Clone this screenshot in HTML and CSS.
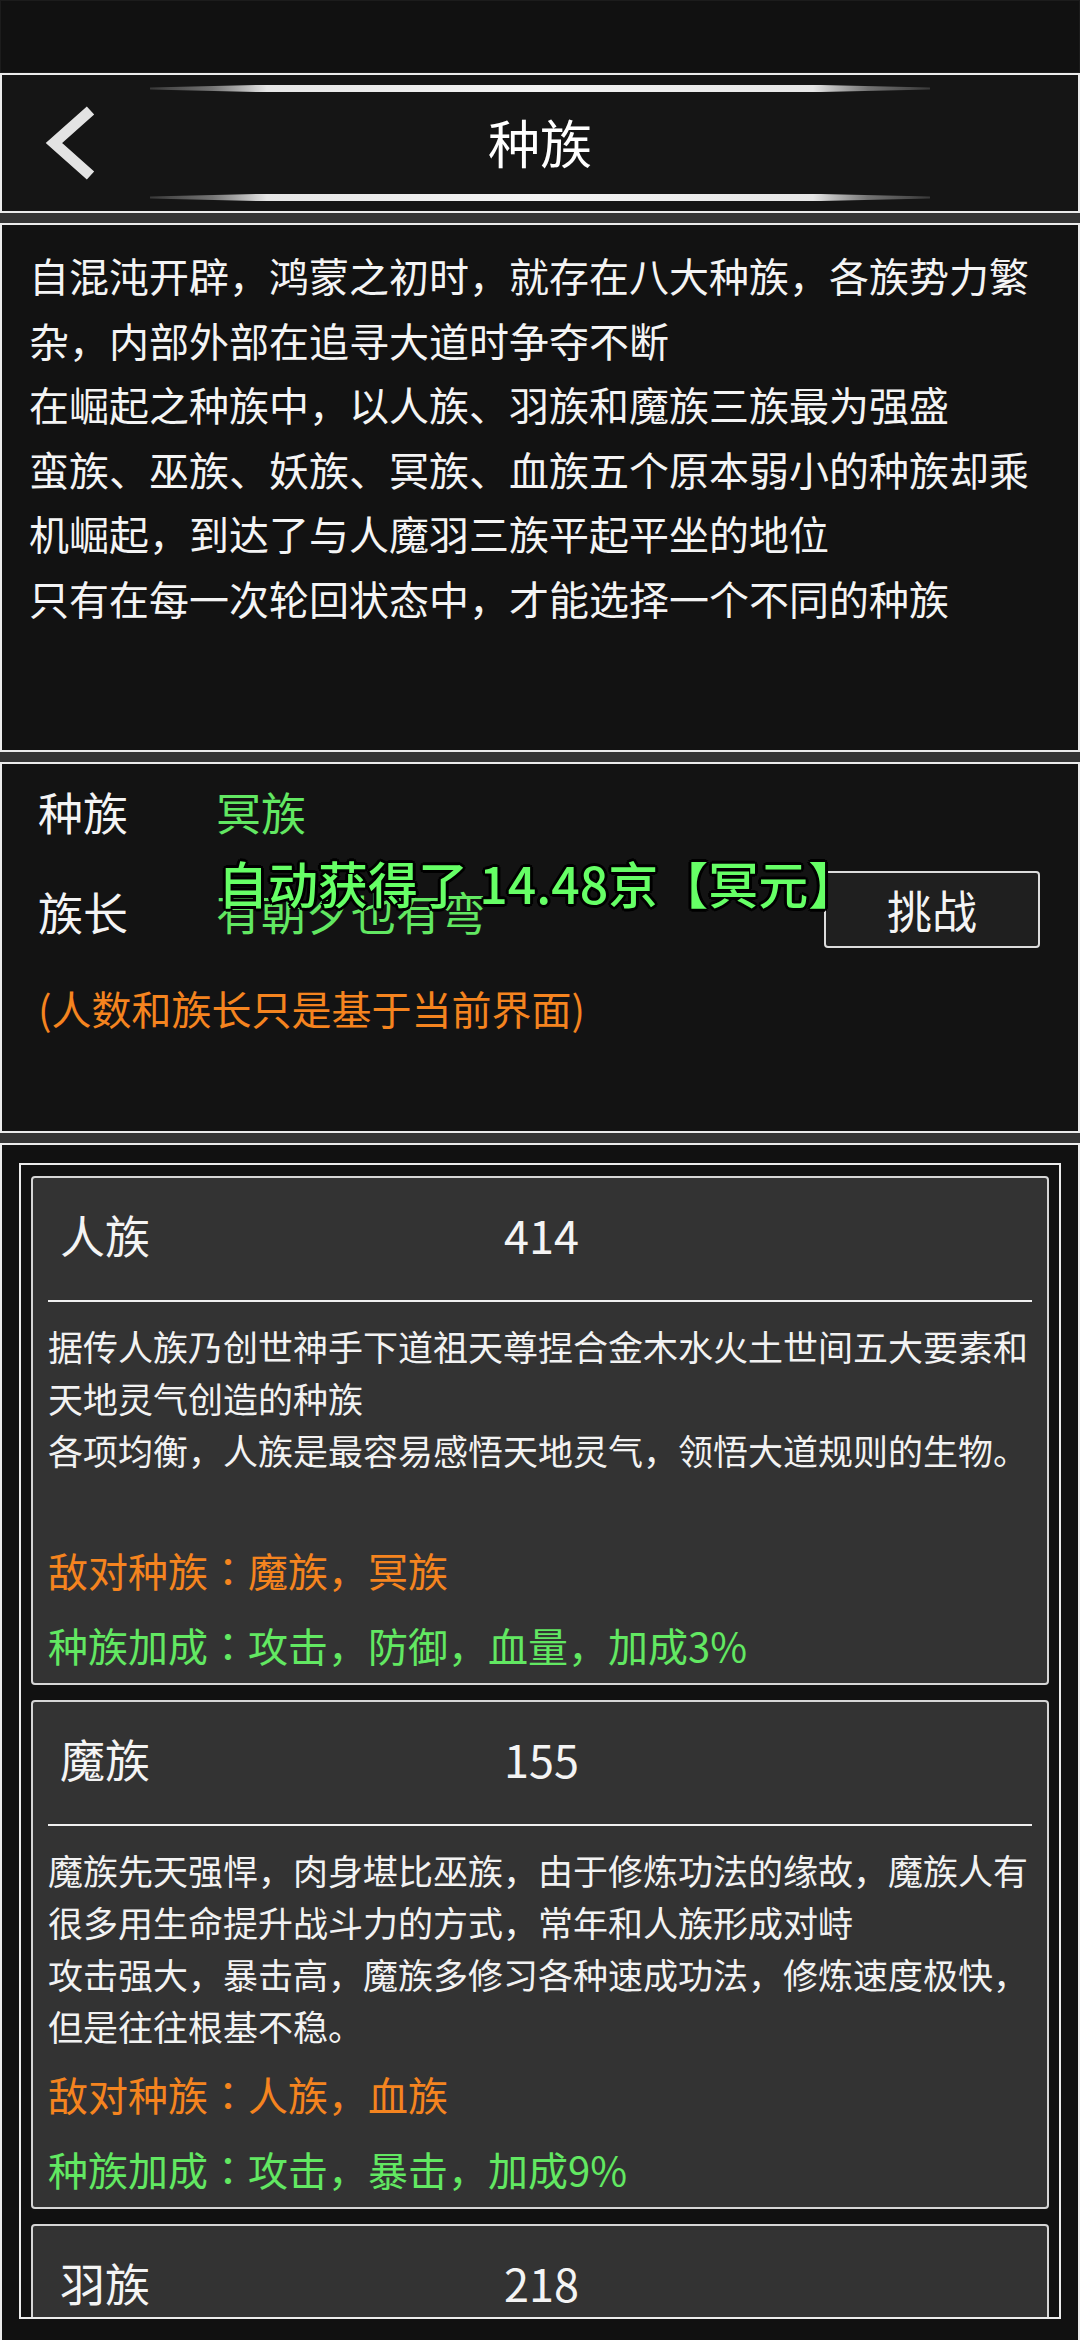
FILE: index.html
```html
<!DOCTYPE html>
<html lang="zh-CN">
<head>
<meta charset="utf-8">
<title>种族</title>
<link rel="stylesheet" href="styles.css">
</head>
<body>
<div class="status"></div>
<header class="panel head">
  <div class="deco"></div>
  <div class="title-row">
    <div class="back">
      <svg width="60" height="80" viewBox="0 0 60 80"><polyline points="50.5,7.5 14,40 50.5,72.5" fill="none" stroke="#e3e3e3" stroke-width="11" stroke-linejoin="miter"/></svg>
    </div>
    <h1 class="title">种族</h1>
    <div></div>
  </div>
  <div class="deco"></div>
</header>
<div class="gap"></div>
<section class="panel intro">
  <p>自混沌开辟，鸿蒙之初时，就存在八大种族，各族势力繁杂，内部外部在追寻大道时争夺不断</p>
  <p>在崛起之种族中，以人族、羽族和魔族三族最为强盛</p>
  <p>蛮族、巫族、妖族、冥族、血族五个原本弱小的种族却乘机崛起，到达了与人魔羽三族平起平坐的地位</p>
  <p>只有在每一次轮回状态中，才能选择一个不同的种族</p>
</section>
<div class="gap"></div>
<section class="panel info">
  <div class="row r1"><span class="lbl">种族</span><span class="val">冥族</span></div>
  <div class="row r2"><span class="lbl">族长</span><span class="val">有朝夕也有弯</span><button class="btn">挑战</button></div>
  <p class="note">(人数和族长只是基于当前界面)</p>
  <div class="toast">自动获得了 14.48京【冥元】</div>
</section>
<div class="gap"></div>
<section class="panel list">
  <div class="box">
    <div class="card">
      <div class="card-head"><span class="name">人族</span><span class="num">414</span></div>
      <div class="rule"></div>
      <p class="desc">据传人族乃创世神手下道祖天尊捏合金木水火土世间五大要素和天地灵气创造的种族<br>各项均衡，人族是最容易感悟天地灵气，领悟大道规则的生物。<br>&nbsp;</p>
      <p class="enemy">敌对种族<span class="colon" lang="ja">：</span>魔族，冥族</p>
      <p class="bonus">种族加成<span class="colon" lang="ja">：</span>攻击，防御，血量，加成3%</p>
    </div>
    <div class="card">
      <div class="card-head"><span class="name">魔族</span><span class="num">155</span></div>
      <div class="rule"></div>
      <p class="desc">魔族先天强悍，肉身堪比巫族，由于修炼功法的缘故，魔族人有很多用生命提升战斗力的方式，常年和人族形成对峙<br>攻击强大，暴击高，魔族多修习各种速成功法，修炼速度极快，但是往往根基不稳。</p>
      <p class="enemy">敌对种族<span class="colon" lang="ja">：</span>人族，血族</p>
      <p class="bonus">种族加成<span class="colon" lang="ja">：</span>攻击，暴击，加成9%</p>
    </div>
    <div class="card">
      <div class="card-head"><span class="name">羽族</span><span class="num">218</span></div>
      <div class="rule"></div>
    </div>
  </div>
</section>
</body>
</html>
```
FILE: styles.css
```css
* { box-sizing: border-box; }
html, body { margin: 0; padding: 0; }
body {
  background: #111111;
  font-family: "Noto Sans CJK SC", "Noto Sans", sans-serif;
  color: #f2f2f2;
  width: 1080px;
  height: 2340px;
  overflow: hidden;
}
p { margin: 0; }

.status {
  height: 73px;
  background: #111111;
  border: 1px solid #1c1c1c;
}

.panel {
  border: 2px solid #ececec;
  background: #131313;
}

.gap {
  height: 10px;
  background: #353535;
}

/* header */
.head {
  background: #151515;
  padding: 10px 0;
  display: flex;
  flex-direction: column;
}
.deco {
  width: 780px;
  height: 7px;
  margin: 0 auto;
  background: linear-gradient(90deg,
    rgba(80,80,80,0.6) 0%,
    rgba(140,140,140,0.8) 8%,
    #e6e6e6 15%,
    #f3f3f3 50%,
    #e6e6e6 85%,
    rgba(140,140,140,0.8) 92%,
    rgba(80,80,80,0.6) 100%);
  clip-path: polygon(0 35%, 14% 0, 86% 0, 100% 35%, 100% 65%, 86% 100%, 14% 100%, 0 65%);
}
.title-row {
  height: 102px;
  display: grid;
  grid-template-columns: 1fr auto 1fr;
  align-items: center;
}
.back {
  padding-left: 38px;
  display: flex;
  align-items: center;
}
.back svg { display: block; }
.title {
  margin: 0;
  font-size: 52px;
  font-weight: 400;
  color: #ffffff;
  line-height: 1;
  padding-bottom: 2px;
}

/* intro */
.intro {
  height: 529px;
  background: #121212;
  padding: 18px 30px 0 27px;
  font-size: 40px;
  line-height: 64.5px;
  color: #f4f4f4;
}

/* info */
.info {
  position: relative;
  height: 371px;
  padding: 0 38px 0 36px;
}
.row {
  display: flex;
  align-items: center;
  font-size: 45px;
}
.r1 { height: 94px; }
.r2 { height: 106px; }
.lbl { width: 178px; color: #f4f4f4; }
.val { color: #62e862; flex: 1; }
.btn {
  width: 216px;
  height: 77px;
  border: 2px solid #dcdcdc;
  border-radius: 4px;
  background: #1f1f1f;
  color: #f4f4f4;
  font-family: inherit;
  font-size: 45px;
  padding: 0;
  margin-top: -3px;
}
.note {
  margin-top: 14px;
  font-size: 40px;
  line-height: 60px;
  color: #f5841f;
}
.toast {
  position: absolute;
  left: 216px;
  top: 88px;
  font-size: 50px;
  font-weight: 500;
  line-height: 60px;
  color: #66ff66;
  white-space: nowrap;
  text-shadow:
    -2px -2px 0 #000, 2px -2px 0 #000, -2px 2px 0 #000, 2px 2px 0 #000,
    0 -3px 0 #000, 0 3px 0 #000, -3px 0 0 #000, 3px 0 0 #000;
}

/* list */
.list {
  height: 1300px;
  padding: 18px 17px 0 17px;
  background: #111111;
}
.box {
  height: 1156px;
  border: 2px solid #ececec;
  padding: 11px 10px 0 10px;
  overflow: hidden;
  display: flex;
  flex-direction: column;
  gap: 15px;
}
.card {
  flex: none;
  background: #333333;
  border: 2px solid #d6d6d6;
  border-radius: 4px;
}
.card-head {
  height: 122px;
  display: grid;
  grid-template-columns: 442px auto;
  align-items: center;
  padding-left: 27px;
  padding-bottom: 10px;
  font-size: 45px;
  color: #f4f4f4;
}
.num { padding-left: 2px; }
.rule {
  height: 2px;
  margin: 0 15px;
  background: #f0f0f0;
}
.desc {
  margin-top: 18px;
  padding: 0 10px 0 15px;
  font-size: 35px;
  line-height: 52px;
  color: #f2f2f2;
}
.enemy, .bonus {
  padding-left: 15px;
  font-size: 40px;
  line-height: 75px;
}
.enemy { color: #f5841f; margin-top: 5px; }
.bonus { color: #62e862; }
.colon { font-family: "Noto Sans CJK JP", "Noto Sans CJK TC", sans-serif; }
```
